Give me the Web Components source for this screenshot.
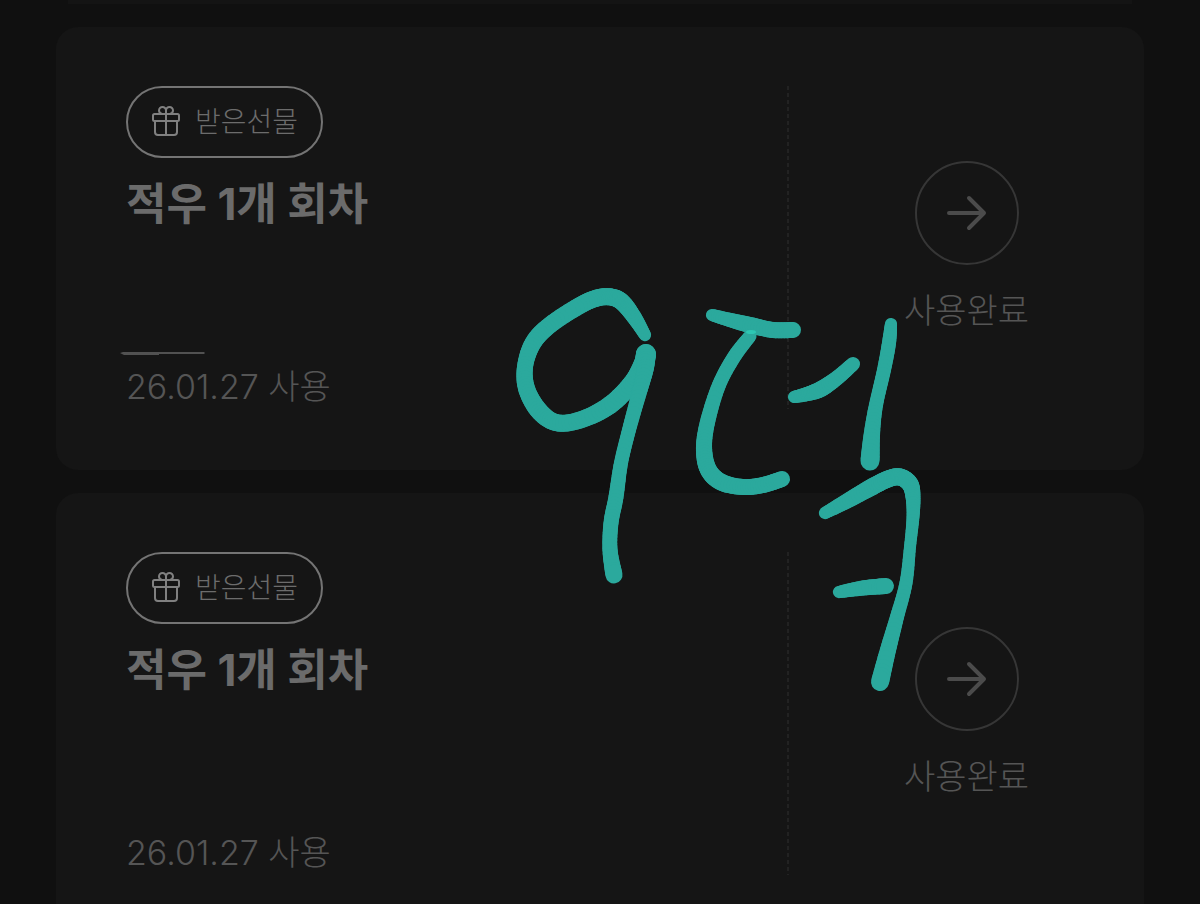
<!DOCTYPE html>
<html lang="ko">
<head>
<meta charset="utf-8">
<meta name="viewport" content="width=device-width, initial-scale=1">
<title>받은선물</title>
<style>
  body {
    margin: 0;
    background: #101010;
    color: #6b6b6b;
    font-family: Inter, "Noto Sans CJK KR", sans-serif;
  }
</style>
</head>
<body>
<ticket-list>
  <ticket-card date="26.01.27">적우 1개 회차</ticket-card>
  <ticket-card date="26.01.27">적우 1개 회차</ticket-card>
  <ink-layer slot="overlay"></ink-layer>
</ticket-list>

<script>
class TicketList extends HTMLElement {
  constructor() {
    super();
    this.attachShadow({mode: 'open'}).innerHTML = `
<style>
  :host {
    display: block;
    position: relative;
    height: 100vh;
    overflow: hidden;
  }
  main {
    display: flex;
    flex-direction: column;
    gap: 23px;
    padding: 0 56px;
  }
  /* lower edge of the card that is scrolled away */
  .previous {
    height: 4px;
    margin: 0 12px;
    background: #141414;
  }
</style>
<main><div class="previous"></div><slot></slot></main>
<slot name="overlay"></slot>
`;
  }
}
customElements.define('ticket-list', TicketList);

class GiftBadge extends HTMLElement {
  constructor() {
    super();
    this.attachShadow({mode: 'open'}).innerHTML = `
<style>
  :host {
    display: inline-flex;
    align-items: center;
    gap: 14px;
    height: 68px;
    padding: 0 23px;
    border: 2px solid #747474;
    border-radius: 36px;
    color: #6c6c6c;
    font-size: 28px;
    font-weight: 300;
    line-height: 36px;
  }
  svg {
    width: 30px;
    height: 34px;
    fill: none;
    stroke: #808080;
    stroke-width: 2;
    stroke-linejoin: round;
  }
</style>
<svg viewBox="0 0 30 34" aria-hidden="true">
  <rect x="2" y="9" width="26" height="7" rx="1.500"/>
  <path d="M4 16v11q0 3 3 3h16q3 0 3-3V16M15 9v21"/>
  <path d="M15 9H11q-3-1-3-3.500a3.500 3.500 0 0 1 7 0V9h4q3-1 3-3.500a3.500 3.500 0 0 0-7 0"/>
</svg>
<span><slot></slot></span>
`;
  }
}
customElements.define('gift-badge', GiftBadge);

class TicketCard extends HTMLElement {
  constructor() {
    super();
    this.attachShadow({mode: 'open'}).innerHTML = `
<style>
  :host {
    display: flex;
    padding: 59px 0 61px 70px;
    border-radius: 22px;
    background: #151515;
  }
  .info {
    flex: 1;
    display: flex;
    flex-direction: column;
    align-items: flex-start;
  }
  h2 {
    margin: 16px 0 0;
    font-size: 44px;
    font-weight: 700;
    line-height: 60px;
  }
  .date {
    margin: auto 0 0;
    color: #555;
    font-size: 34px;
    font-weight: 300;
    line-height: 44px;
  }
  .rule {
    width: 2px;
    background: repeating-linear-gradient(#222 0 4px, transparent 4px 7px);
  }
  .action {
    display: flex;
    flex-direction: column;
    align-items: center;
    gap: 22px;
    width: 355px;
    min-height: 323px;
    box-sizing: border-box;
    padding-top: 75px;
    color: #555;
    font-size: 34px;
    font-weight: 300;
    line-height: 48px;
  }
  button {
    width: 104px;
    height: 104px;
    padding: 0;
    border: 2px solid #363636;
    border-radius: 50%;
    background: none;
  }
  svg {
    display: block;
    margin: auto;
    width: 40px;
    height: 36px;
    fill: none;
    stroke: #4b4b4b;
    stroke-width: 4;
    stroke-linecap: round;
    stroke-linejoin: round;
  }
</style>
<div class="info">
  <gift-badge>받은선물</gift-badge>
  <h2><slot></slot></h2>
  <p class="date"></p>
</div>
<div class="rule"></div>
<div class="action">
  <button type="button" aria-labelledby="state">
    <svg viewBox="0 0 40 36" aria-hidden="true"><path d="M2 18h35M22 3l15 15-15 15"/></svg>
  </button>
  <span id="state">사용완료</span>
</div>
`;
  }

  connectedCallback() {
    this.shadowRoot.querySelector('.date').textContent = `${this.getAttribute('date')} 사용`;
  }
}
customElements.define('ticket-card', TicketCard);

// pen strokes, each point is [x, y, pen width]
const STROKES = [
  [[645, 335, 12], [634, 317, 15], [622, 302, 17], [611, 297, 17], [597, 298, 17], [579, 306, 17],
   [550, 325, 17], [533, 343, 17], [525, 367, 16], [527, 390, 17], [540, 412, 18], [558, 423, 17],
   [583, 419, 17], [610, 405, 18], [632, 383, 18], [643, 363, 18], [646, 354, 20]],
  [[646, 354, 20], [645, 370, 17], [638, 397, 15], [629, 430, 14], [621, 463, 14], [616, 497, 15],
   [611, 523, 15], [610, 550, 15], [614, 575, 17]],
  [[712, 315, 12], [730, 320, 14], [750, 325, 16], [773, 330, 16], [793, 330, 16]],
  [[750, 336, 13], [734, 357, 14], [719, 385, 14], [708, 420, 15], [704, 447, 16], [708, 469, 17],
   [721, 482, 17], [743, 487, 16], [763, 485, 16], [782, 479, 16]],
  [[794, 397, 12], [807, 394, 14], [821, 389, 16], [837, 378, 15], [853, 364, 14]],
  [[891, 324, 12], [889, 343, 14], [884, 370, 14], [876, 405, 14], [872, 433, 16], [870, 461, 19]],
  [[825, 513, 12], [847, 501, 15], [870, 488, 17], [888, 479, 17], [900, 477, 17], [910, 484, 17],
   [913, 497, 15], [913, 517, 13], [910, 547, 12], [906, 583, 13], [897, 617, 14], [888, 650, 16],
   [880, 682, 18]],
  [[839, 592, 12], [863, 588, 15], [886, 586, 16]],
];

class InkLayer extends HTMLElement {
  constructor() {
    super();
    this.attachShadow({mode: 'open'}).innerHTML = `
<style>
  :host {
    position: absolute;
    inset: 0;
    pointer-events: none;
  }
  svg {
    display: block;
    width: 100%;
  }
  .ink {
    stroke: #2ba99d;
    stroke-linecap: round;
  }
  .scratch {
    fill: #515151;
  }
</style>
<svg viewBox="0 0 1200 904" aria-hidden="true">
  <path class="scratch" d="M120 353l3-1h81l1 1-1 1h-45v1h-35z"/>
  <g class="ink"></g>
  <ellipse cx="751" cy="332" rx="5" ry="2" fill="#2dc7b3"/>
</svg>
`;
    this.shadowRoot.querySelector('.ink').innerHTML = STROKES.map((s) => this._stroke(s)).join('');
  }

  // smooth curve through the points, cut into short lines so the width can change
  _stroke(points) {
    const steps = 8;
    let html = '';
    let last = points[0];
    for (let i = 0; i < points.length - 1; i++) {
      const p0 = points[Math.max(i - 1, 0)];
      const p1 = points[i];
      const p2 = points[i + 1];
      const p3 = points[Math.min(i + 2, points.length - 1)];
      for (let n = 1; n <= steps; n++) {
        const t = n / steps;
        const next = p1.map((_, k) => 0.5 * (2 * p1[k] + (p2[k] - p0[k]) * t +
          (2 * p0[k] - 5 * p1[k] + 4 * p2[k] - p3[k]) * t * t +
          (3 * p1[k] - p0[k] - 3 * p2[k] + p3[k]) * t * t * t));
        html += `<line x1="${last[0]}" y1="${last[1]}" x2="${next[0]}" y2="${next[1]}" stroke-width="${next[2]}"/>`;
        last = next;
      }
    }
    return html;
  }
}
customElements.define('ink-layer', InkLayer);
</script>
</body>
</html>
